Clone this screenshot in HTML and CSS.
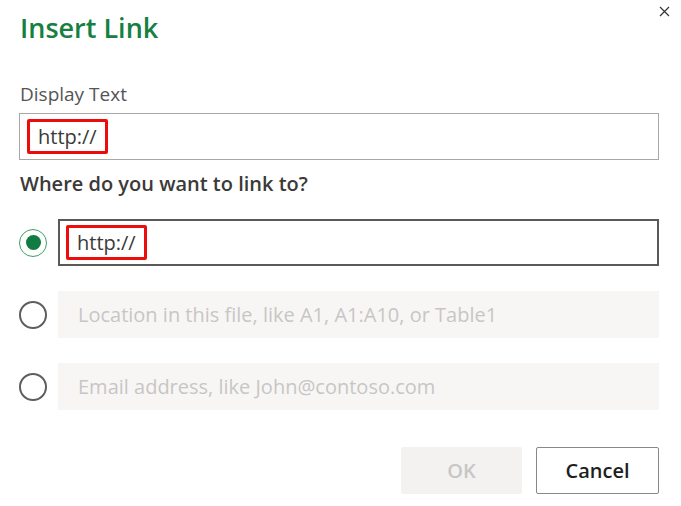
FILE: index.html
```html
<!DOCTYPE html>
<html>
<head>
<meta charset="utf-8">
<link rel="stylesheet" href="styles.css">
</head>
<body>
<div class="dialog">
  <div class="header">
    <h1 class="title">Insert Link</h1>
    <button class="close" aria-label="Close">
      <svg width="11" height="11" viewBox="0 0 11 11"><path d="M1 1L10 10M10 1L1 10" stroke="#333" stroke-width="1.2" fill="none"/></svg>
    </button>
  </div>
  <label class="label">Display Text</label>
  <div class="field field-light">
    <span class="mark">http://</span>
  </div>
  <div class="question">Where do you want to link to?</div>
  <div class="options">
    <div class="option">
      <span class="radio radio-on"><span class="dot"></span></span>
      <div class="field field-dark"><span class="mark">http://</span></div>
    </div>
    <div class="option">
      <span class="radio"></span>
      <div class="field field-disabled"><span class="placeholder">Location in this file, like A1, A1:A10, or Table1</span></div>
    </div>
    <div class="option">
      <span class="radio"></span>
      <div class="field field-disabled"><span class="placeholder">Email address, like John@contoso.com</span></div>
    </div>
  </div>
  <div class="actions">
    <button class="btn btn-ok">OK</button>
    <button class="btn btn-cancel">Cancel</button>
  </div>
</div>
</body>
</html>
```
FILE: styles.css
```css
html, body {
  margin: 0;
  padding: 0;
  background: #ffffff;
}
body {
  width: 681px;
  height: 506px;
  overflow: hidden;
  font-family: "Open Sans", "Noto Sans", sans-serif;
  color: #323130;
}
.dialog {
  padding: 0 22px 0 19px;
}
.header {
  display: flex;
  justify-content: space-between;
  align-items: flex-start;
}
.title {
  margin: 10px 0 0 1px;
  font-size: 27px;
  font-weight: 600;
  color: #15803f;
  line-height: 36px;
  letter-spacing: 0;
}
.close {
  border: none;
  background: none;
  padding: 0;
  margin: 6px -11px 0 0;
  width: 11px;
  height: 11px;
  display: flex;
}
.label {
  display: block;
  margin: 35px 0 0 1px;
  font-size: 19px;
  line-height: 26px;
  color: #555;
}
.field {
  box-sizing: border-box;
  height: 47px;
  display: flex;
  align-items: center;
  flex: 1;
}
.field-light {
  margin-top: 6px;
  border: 1.5px solid #a9a8a7;
  padding-left: 7px;
}
.field-dark {
  border: 2px solid #5a5958;
  padding-left: 6px;
}
.field-disabled {
  background: #f7f6f5;
  padding-left: 20px;
}
.mark {
  box-sizing: border-box;
  height: 35px;
  width: 81px;
  border: 3px solid #ec0c0c;
  border-radius: 2px;
  padding-left: 8px;
  display: flex;
  align-items: center;
  font-size: 20px;
  color: #3b3a39;
}
.question {
  margin: 11px 0 0 1px;
  font-size: 20px;
  line-height: 26px;
  font-weight: 600;
  color: #3b3a39;
}
.options {
  display: flex;
  flex-direction: column;
  gap: 25px;
  margin-top: 22px;
}
.option {
  display: flex;
  align-items: center;
  gap: 11px;
}
.radio {
  box-sizing: border-box;
  width: 28px;
  height: 28px;
  border-radius: 50%;
  border: 2px solid #605e5c;
  display: flex;
  align-items: center;
  justify-content: center;
  flex: none;
}
.radio-on {
  border: 1.5px solid #3f9e63;
}
.dot {
  width: 15px;
  height: 15px;
  border-radius: 50%;
  background: #107c41;
}
.placeholder {
  font-size: 20px;
  color: #c8c6c4;
}
.actions {
  display: flex;
  justify-content: flex-end;
  gap: 14px;
  margin-top: 37px;
}
.btn {
  box-sizing: border-box;
  height: 47px;
  font-family: "Open Sans", "Noto Sans", sans-serif;
  font-size: 20px;
  font-weight: 600;
  border-radius: 2px;
}
.btn-ok {
  width: 121px;
  background: #f3f2f1;
  border: none;
  color: #c8c6c4;
}
.btn-cancel {
  width: 123px;
  background: #fff;
  border: 1.5px solid #8a8886;
  color: #201f1e;
}
```
